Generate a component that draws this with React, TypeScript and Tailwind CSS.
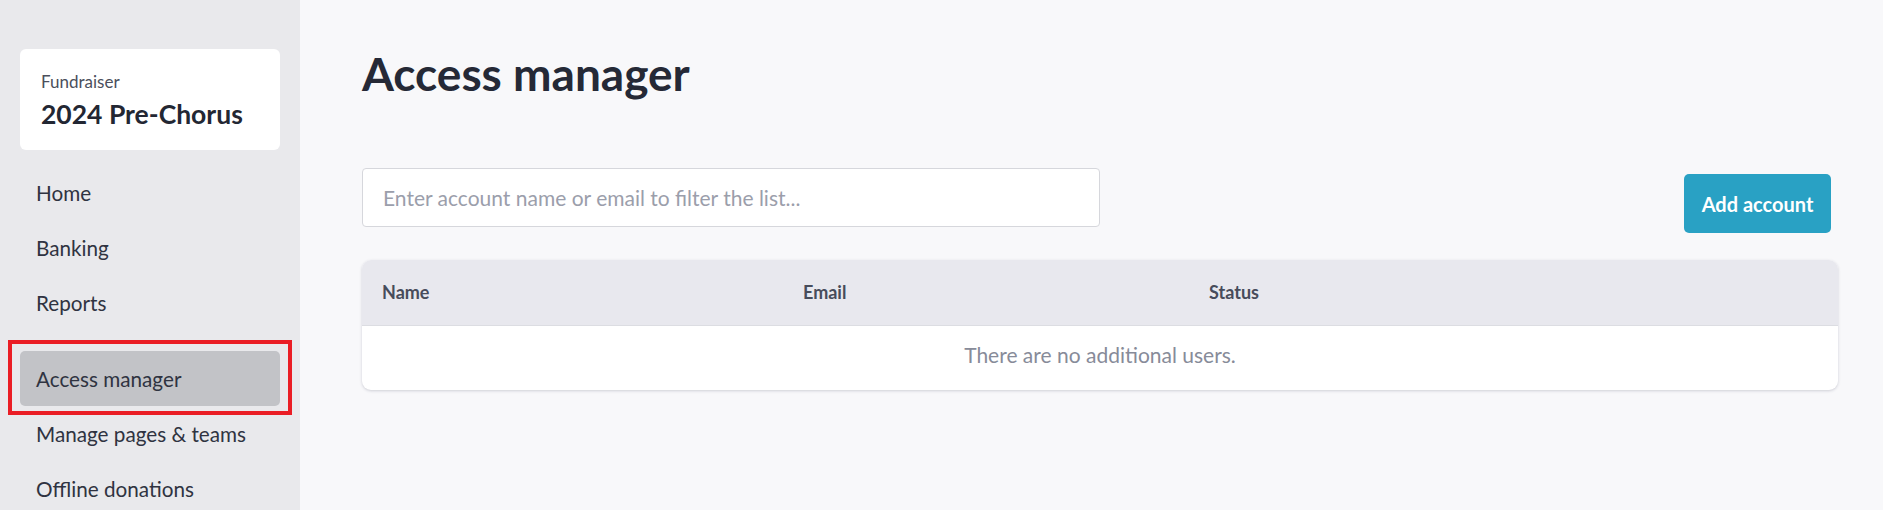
import React from 'react';

const navTop = ['Home', 'Banking', 'Reports'];
const navBottom = ['Access manager', 'Manage pages & teams', 'Offline donations'];

function NavItem({ label, active }: { label: string; active?: boolean }) {
  return (
    <div
      className={`relative flex h-[55px] items-center rounded-[5px] px-4 pt-[2px] text-[20.7px] text-[#2f3341] ${
        active ? 'bg-[#c2c3c7]' : ''
      }`}
    >
      {label}
      {active && (
        <div className="pointer-events-none absolute -left-[12px] -right-[12px] -top-[11px] -bottom-[9px] border-4 border-[#ea1d25]" />
      )}
    </div>
  );
}

export default function App() {
  return (
    <div
      className="flex h-[510px] w-[1883px] overflow-hidden bg-[#f8f8fa]"
      style={{ fontFamily: 'Lato, "Noto Sans", Arial, sans-serif' }}
    >
      <aside className="w-[300px] shrink-0 bg-[#e9e9ec] px-[20px] pt-[49px]">
        <div className="h-[101px] rounded-[6px] bg-white px-[21px] pt-[23px]">
          <div className="text-[17px] leading-[19px] text-[#4b4f5c]">Fundraiser</div>
          <div className="mt-[6px] text-[26.5px] font-bold leading-[34px] text-[#232733]">2024 Pre-Chorus</div>
        </div>

        <nav className="mt-[15px]">
          {navTop.map(item => (
            <NavItem key={item} label={item} />
          ))}
        </nav>
        <nav className="mt-[21px]">
          {navBottom.map(item => (
            <NavItem key={item} label={item} active={item === 'Access manager'} />
          ))}
        </nav>
      </aside>

      <main className="flex-1 pl-[62px] pr-[45px] pt-[46px]">
        <h1 className="text-[46px] font-bold leading-[55px] text-[#252936]">Access manager</h1>

        <div className="mt-[67px] flex items-start justify-between">
          <input
            type="text"
            placeholder="Enter account name or email to filter the list..."
            className="h-[59px] w-[738px] rounded-[4px] border border-[#d6d7dc] bg-white px-[20px] text-[21px] text-[#2f3341] outline-none placeholder:text-[#9b9eab]"
          />
          <button className="mr-[7px] mt-[6px] h-[59px] w-[147px] rounded-[5px] bg-[#29a1c4] text-[20px] font-bold text-white">
            Add account
          </button>
        </div>

        <div className="mt-[27px] overflow-hidden rounded-[9px] bg-white shadow-[0_1px_3px_rgba(60,64,90,0.22)]">
          <div className="grid h-[66px] grid-cols-[421px_406px_1fr] items-center border-b border-[#dcdde2] bg-[#e8e8ee] px-[20px] text-[18px] font-bold text-[#474c5b]">
            <div>Name</div>
            <div>Email</div>
            <div>Status</div>
          </div>
          <div className="flex h-[64px] items-start justify-center pt-[13px] text-[21px] text-[#878b99]">
            There are no additional users.
          </div>
        </div>
      </main>
    </div>
  );
}
